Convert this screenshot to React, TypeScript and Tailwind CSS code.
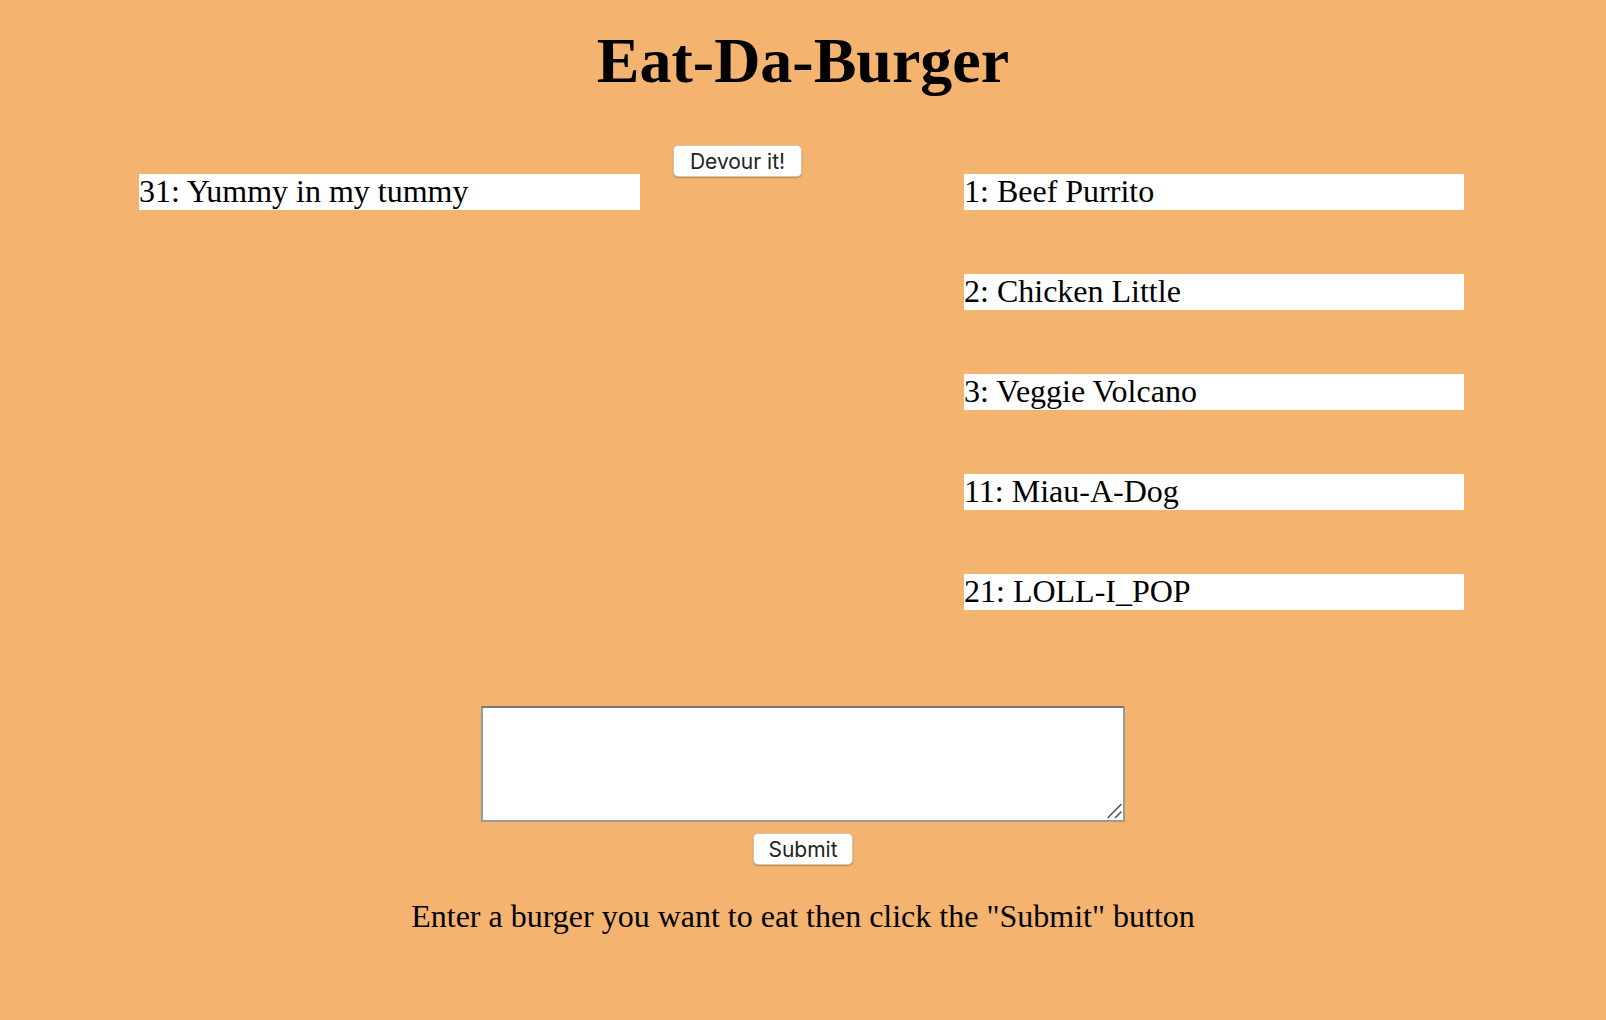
const devoured = [{ id: 31, name: "Yummy in my tummy" }];

const burgers = [
  { id: 1, name: "Beef Purrito" },
  { id: 2, name: "Chicken Little" },
  { id: 3, name: "Veggie Volcano" },
  { id: 11, name: "Miau-A-Dog" },
  { id: 21, name: "LOLL-I_POP" },
];

const serif = "font-['Liberation_Serif','Times_New_Roman',serif]";
const btn =
  "rounded-[5px] border border-[#d9c2a8] bg-white px-3 font-['Inter','Roboto',sans-serif] text-[21px] leading-none text-[#222] shadow-[0_1px_1.5px_rgba(0,0,0,0.25)]";

export default function App() {
  return (
    <div className={`min-h-screen w-full bg-[#f4b470] text-black ${serif}`}>
      <h1 className="pt-[25px] text-center text-[64px] font-bold leading-[71px]">
        Eat-Da-Burger
      </h1>

      <div className="mt-[49px] flex">
        {/* left column: items with a devour button */}
        <div className="flex w-[803px] flex-col">
          {devoured.map((b) => (
            <div key={b.id} className="flex flex-col">
              <button
                type="button"
                className={`${btn} h-[32px] w-[129px] self-end mr-[1px]`}
              >
                Devour it!
              </button>
              <div className="-mt-[3px] ml-[139px] h-[36px] w-[501px] bg-white text-[32px] leading-[35px]">
                {b.id}: {b.name}
              </div>
            </div>
          ))}
        </div>

        {/* right column */}
        <div className="ml-[161px] flex flex-col gap-[64px] pt-[29px]">
          {burgers.map((b) => (
            <div
              key={b.id}
              className="h-[36px] w-[500px] bg-white text-[32px] leading-[35px]"
            >
              {b.id}: {b.name}
            </div>
          ))}
        </div>
      </div>

      <form
        className="mt-[96px] flex flex-col items-center"
        onSubmit={(e) => e.preventDefault()}
      >
        <div className="relative h-[116px] w-[644px]">
          <textarea className="block h-full w-full resize-none border-2 border-[#9a9a9a] border-t-[#787878] bg-white p-1 text-[26px] outline-none" />
          <svg
            className="pointer-events-none absolute bottom-[2px] right-[2px] h-[16px] w-[16px]"
            viewBox="0 0 16 16"
          >
            <path
              d="M1 13.5 L14 0.5 M8.5 13.5 L14 8"
              stroke="#555"
              strokeWidth="1.6"
              strokeLinecap="round"
              fill="none"
            />
          </svg>
        </div>
        <button type="submit" className={`${btn} mt-[11px] h-[32px] w-[100px]`}>
          Submit
        </button>
      </form>

      <p className="mt-[33px] text-center text-[32px] leading-[37px]">
        Enter a burger you want to eat then click the "Submit" button
      </p>
    </div>
  );
}
